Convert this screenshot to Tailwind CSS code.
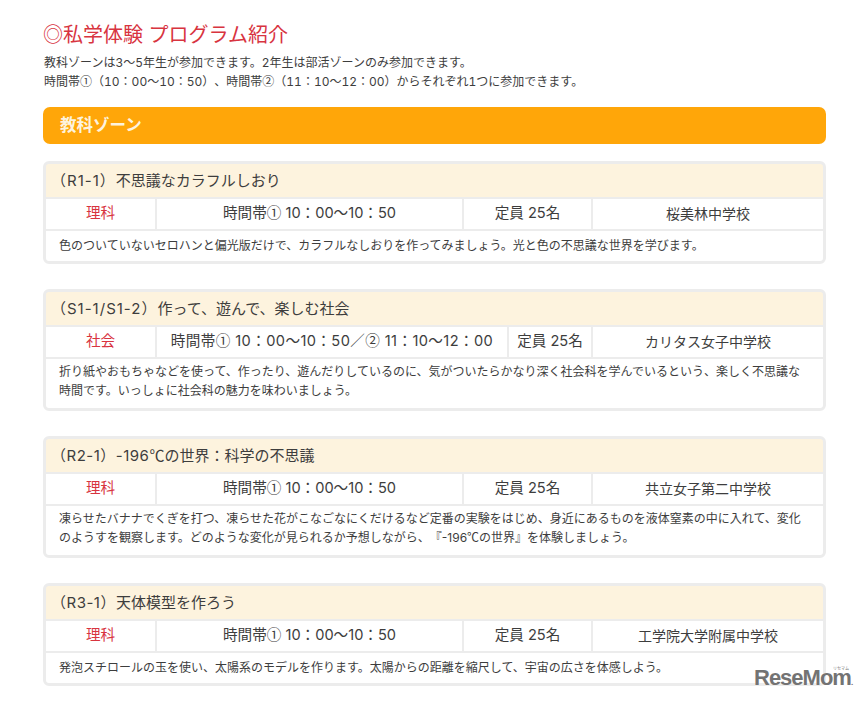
<!DOCTYPE html>
<html lang="ja">
<head>
<meta charset="UTF-8">
<title>私学体験 プログラム紹介</title>
<script src="https://cdn.jsdelivr.net/npm/@tailwindcss/browser@4"></script>
</head>
<body class="bg-white h-[701px] overflow-hidden relative font-['Inter','Noto_Sans_CJK_JP',sans-serif] [text-spacing-trim:space-all] text-[#3d3d3d]">
<main class="ml-[43px] w-[783px] pt-[22px]">
  <h1 class="text-[20px] leading-[26px] text-[#d8343f]">◎私学体験 プログラム紹介</h1>
  <p class="mt-[5px] ml-px text-[12px] leading-[19px] tabular-nums">教科ゾーンは3〜5年生が参加できます。2年生は部活ゾーンのみ参加できます。<br>時間帯<span class="font-['Noto_Sans_CJK_JP'] leading-[0]">①</span>（10：00〜10：50）、時間帯<span class="font-['Noto_Sans_CJK_JP'] leading-[0]">②</span>（11：10〜12：00）からそれぞれ1つに参加できます。</p>
  <h2 class="mt-[16px] h-[37px] rounded-[7px] bg-[#ffa609] pl-[17px] text-[16.5px] leading-[37px] font-bold text-[#fdf3de]">教科ゾーン</h2>

  <section class="mt-[17px] border-[3px] border-[#ececec] rounded-[6px] bg-[#ececec] flex flex-col gap-[2px]">
    <h3 class="h-[33px] bg-[#fdf3de] rounded-t-[3px] pl-[5px] text-[15px] leading-[33px]"><span class="tracking-[1px]">（R1-1）</span>不思議なカラフルしおり</h3>
    <div class="grid grid-cols-[109px_305px_127px_230px] gap-[2px] h-[30px] text-[14.6px] leading-[29px] text-center">
      <div class="bg-white text-[#d8343f]">理科</div>
      <div class="bg-white">時間帯<span class="font-['Noto_Sans_CJK_JP'] leading-[0]">①</span> 10：00〜10：50</div>
      <div class="bg-white">定員 25名</div>
      <div class="bg-white text-[14px]">桜美林中学校</div>
    </div>
    <p class="bg-white rounded-b-[3px] h-[30px] pl-[13px] text-[12px] leading-[29px]">色のついていないセロハンと偏光版だけで、カラフルなしおりを作ってみましょう。光と色の不思議な世界を学びます。</p>
  </section>

  <section class="mt-[25px] border-[3px] border-[#ececec] rounded-[6px] bg-[#ececec] flex flex-col gap-[2px]">
    <h3 class="h-[33px] bg-[#fdf3de] rounded-t-[3px] pl-[5px] text-[15px] leading-[33px]"><span class="tracking-[1px]">（S1-1/S1-2）</span>作って、遊んで、楽しむ社会</h3>
    <div class="grid grid-cols-[109px_350px_82px_230px] gap-[2px] h-[30px] text-[14.6px] leading-[29px] text-center">
      <div class="bg-white text-[#d8343f]">社会</div>
      <div class="bg-white tracking-[0.4px]">時間帯<span class="font-['Noto_Sans_CJK_JP'] leading-[0]">①</span> 10：00〜10：50／<span class="font-['Noto_Sans_CJK_JP'] leading-[0]">②</span> 11：10〜12：00</div>
      <div class="bg-white">定員 25名</div>
      <div class="bg-white text-[14px]">カリタス女子中学校</div>
    </div>
    <p class="bg-white rounded-b-[3px] h-[49px] pl-[13px] pr-[20px] pt-[3px] text-[12px] leading-[19px]">折り紙やおもちゃなどを使って、作ったり、遊んだりしているのに、気がついたらかなり深く社会科を学んでいるという、楽しく不思議な時間です。いっしょに社会科の魅力を味わいましょう。</p>
  </section>

  <section class="mt-[25px] border-[3px] border-[#ececec] rounded-[6px] bg-[#ececec] flex flex-col gap-[2px]">
    <h3 class="h-[33px] bg-[#fdf3de] rounded-t-[3px] pl-[5px] text-[15px] leading-[33px]"><span class="tracking-[0.5px]">（R2-1）-196</span><span class="font-['Noto_Sans_CJK_JP'] leading-[0]">℃</span>の世界：科学の不思議</h3>
    <div class="grid grid-cols-[109px_305px_127px_230px] gap-[2px] h-[30px] text-[14.6px] leading-[29px] text-center">
      <div class="bg-white text-[#d8343f]">理科</div>
      <div class="bg-white">時間帯<span class="font-['Noto_Sans_CJK_JP'] leading-[0]">①</span> 10：00〜10：50</div>
      <div class="bg-white">定員 25名</div>
      <div class="bg-white text-[14px]">共立女子第二中学校</div>
    </div>
    <p class="bg-white rounded-b-[3px] h-[49px] pl-[13px] pr-[20px] pt-[3px] text-[12px] leading-[19px]">凍らせたバナナでくぎを打つ、凍らせた花がこなごなにくだけるなど定番の実験をはじめ、身近にあるものを液体窒素の中に入れて、変化のようすを観察します。どのような変化が見られるか予想しながら、『-196<span class="font-['Noto_Sans_CJK_JP'] leading-[0]">℃</span>の世界』を体験しましょう。</p>
  </section>

  <section class="mt-[25px] border-[3px] border-[#ececec] rounded-[6px] bg-[#ececec] flex flex-col gap-[2px]">
    <h3 class="h-[33px] bg-[#fdf3de] rounded-t-[3px] pl-[5px] text-[15px] leading-[33px]"><span class="tracking-[0.5px]">（R3-1）</span>天体模型を作ろう</h3>
    <div class="grid grid-cols-[109px_305px_127px_230px] gap-[2px] h-[30px] text-[14.6px] leading-[29px] text-center">
      <div class="bg-white text-[#d8343f]">理科</div>
      <div class="bg-white">時間帯<span class="font-['Noto_Sans_CJK_JP'] leading-[0]">①</span> 10：00〜10：50</div>
      <div class="bg-white">定員 25名</div>
      <div class="bg-white text-[14px]">工学院大学附属中学校</div>
    </div>
    <p class="bg-white rounded-b-[3px] h-[30px] pl-[13px] text-[12px] leading-[29px]">発泡スチロールの玉を使い、太陽系のモデルを作ります。太陽からの距離を縮尺して、宇宙の広さを体感しよう。</p>
  </section>
</main>

<div class="absolute left-[754px] top-[672px] font-['Liberation_Sans',sans-serif] text-[22px] leading-[12px] font-bold tracking-[-1px] text-[#737373]">ReseMom<span class="text-[8px]">.</span></div>
<div class="absolute left-[833px] top-[666px] text-[4px] leading-[5px] text-[#777]">リセマム</div>
</body>
</html>
